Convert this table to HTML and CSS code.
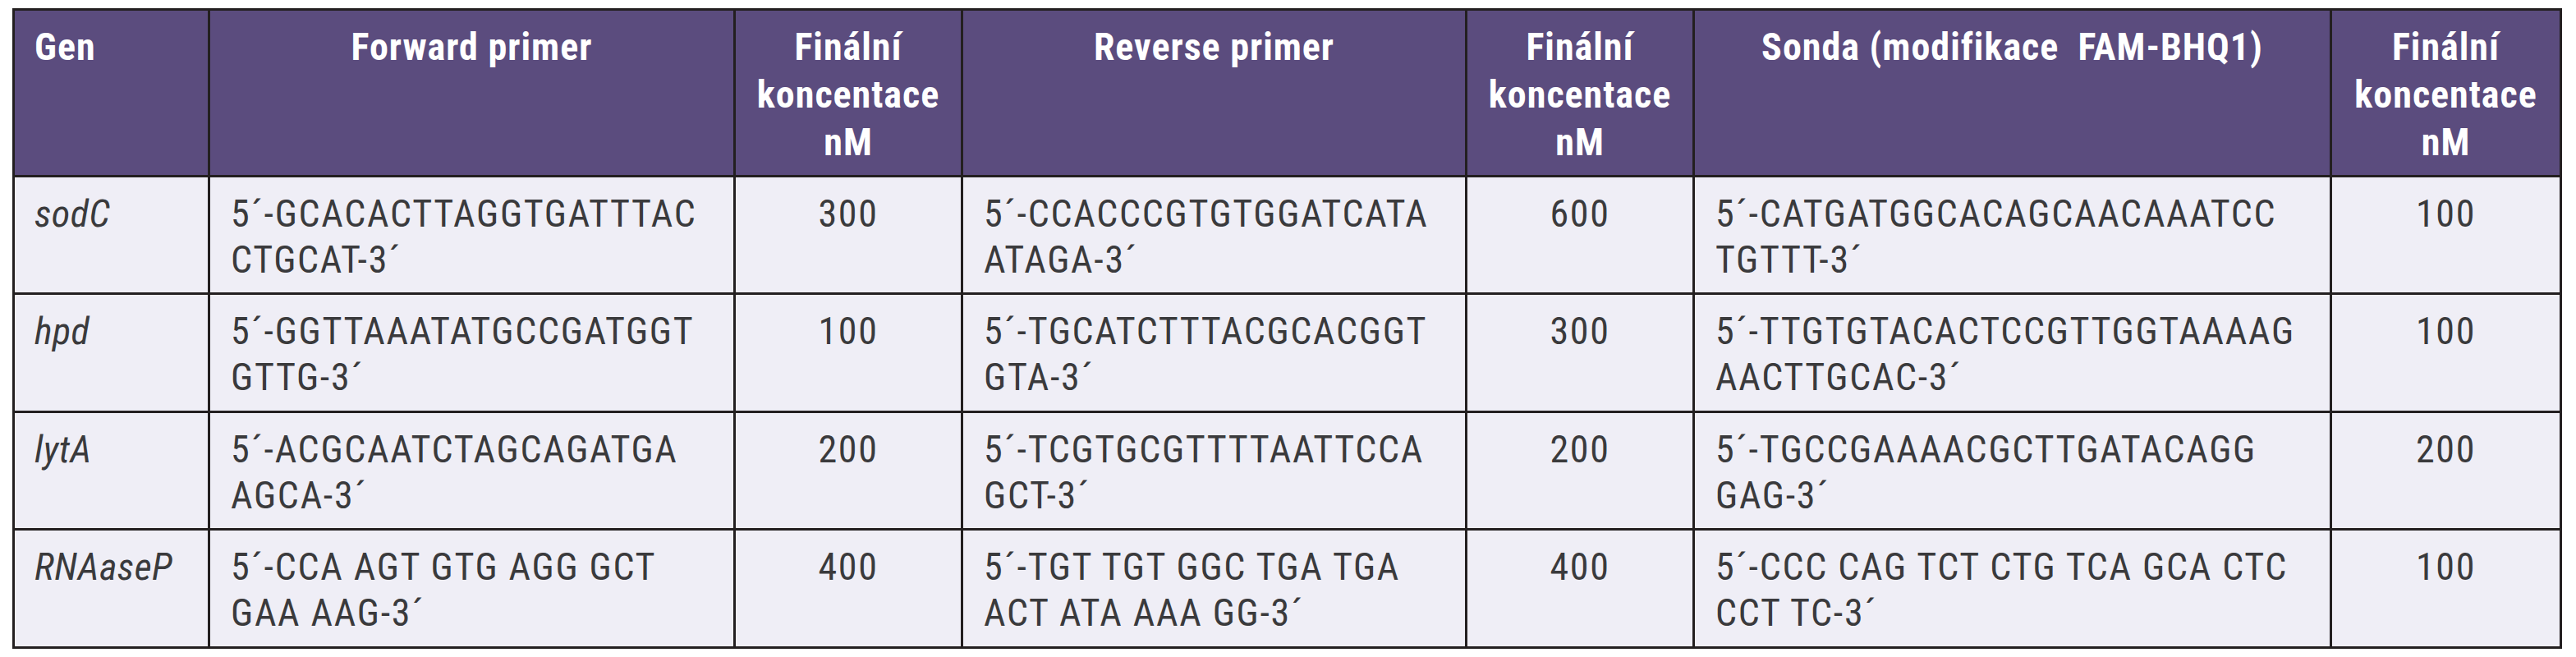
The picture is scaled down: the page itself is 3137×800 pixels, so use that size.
FILE: index.html
```html
<!DOCTYPE html>
<html lang="cs">
<head>
<meta charset="utf-8">
<title>Primery a sondy</title>
<link rel="stylesheet" href="styles.css">
</head>
<body>
<div class="page">
<table class="primers">
<colgroup>
<col class="c-gen">
<col class="c-fwd">
<col class="c-conc">
<col class="c-rev">
<col class="c-conc">
<col class="c-probe">
<col class="c-conc2">
</colgroup>
<thead>
<tr class="head-row">
<th class="left">Gen</th>
<th>Forward primer</th>
<th>Finální<br>koncentace<br>nM</th>
<th>Reverse primer</th>
<th>Finální<br>koncentace<br>nM</th>
<th>Sonda (modifikace &nbsp;FAM-BHQ1)</th>
<th>Finální<br>koncentace<br>nM</th>
</tr>
</thead>
<tbody>
<tr class="row-a">
<td class="gene">sodC</td>
<td>5´-GCACACTTAGGTGATTTAC<br>CTGCAT-3´</td>
<td class="num">300</td>
<td>5´-CCACCCGTGTGGATCATA<br>ATAGA-3´</td>
<td class="num">600</td>
<td>5´-CATGATGGCACAGCAACAAATCC<br>TGTTT-3´</td>
<td class="num">100</td>
</tr>
<tr class="row-b">
<td class="gene">hpd</td>
<td>5´-GGTTAAATATGCCGATGGT<br>GTTG-3´</td>
<td class="num">100</td>
<td>5´-TGCATCTTTACGCACGGT<br>GTA-3´</td>
<td class="num">300</td>
<td>5´-TTGTGTACACTCCGTTGGTAAAAG<br>AACTTGCAC-3´</td>
<td class="num">100</td>
</tr>
<tr class="row-a">
<td class="gene">lytA</td>
<td>5´-ACGCAATCTAGCAGATGA<br>AGCA-3´</td>
<td class="num">200</td>
<td>5´-TCGTGCGTTTTAATTCCA<br>GCT-3´</td>
<td class="num">200</td>
<td>5´-TGCCGAAAACGCTTGATACAGG<br>GAG-3´</td>
<td class="num">200</td>
</tr>
<tr class="row-c">
<td class="gene">RNAaseP</td>
<td>5´-CCA AGT GTG AGG GCT<br>GAA AAG-3´</td>
<td class="num">400</td>
<td>5´-TGT TGT GGC TGA TGA<br>ACT ATA AAA GG-3´</td>
<td class="num">400</td>
<td>5´-CCC CAG TCT CTG TCA GCA CTC<br>CCT TC-3´</td>
<td class="num">100</td>
</tr>
</tbody>
</table>
</div>
</body>
</html>
```
FILE: styles.css
```css
html, body {
  margin: 0;
  padding: 0;
  background: #ffffff;
}

.page {
  padding: 10px 0 0 15px;
}

.primers {
  border-collapse: separate;
  border-spacing: 0;
  table-layout: fixed;
  width: 3105px;
  border-top: 3px solid #231f20;
  border-left: 3px solid #231f20;
  font-family: "Roboto Condensed", "Liberation Sans", sans-serif;
}

.c-gen { width: 238px; }
.c-fwd { width: 640px; }
.c-conc { width: 277px; }
.c-rev { width: 614px; }
.c-probe { width: 776px; }
.c-conc2 { width: 280px; }

.primers th,
.primers td {
  border-right: 3px solid #231f20;
  border-bottom: 3px solid #231f20;
  vertical-align: top;
  white-space: nowrap;
}

.primers th {
  background: #5b4c7e;
  color: #ffffff;
  font-weight: bold;
  font-size: 46px;
  line-height: 58px;
  letter-spacing: 1px;
  text-align: center;
  padding: 15px 6px 0 6px;
}

.primers th.left {
  text-align: left;
  padding-left: 24px;
}

.head-row { height: 203px; }
.row-a { height: 143px; }
.row-b { height: 144px; }
.row-c { height: 144px; }

.primers td {
  background: #efeef6;
  color: #3a3a3c;
  font-size: 46px;
  line-height: 56px;
  letter-spacing: 1.7px;
  padding: 16px 6px 0 25px;
  text-align: left;
}

.primers td.gene {
  font-style: italic;
  letter-spacing: 0.5px;
  padding-left: 24px;
}

.primers td.num {
  text-align: center;
  padding-left: 6px;
  padding-right: 6px;
}
```
